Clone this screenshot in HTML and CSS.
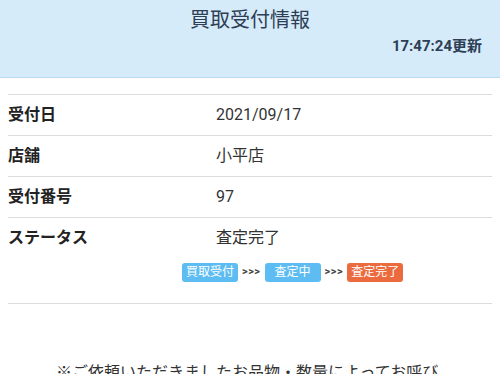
FILE: index.html
```html
<!DOCTYPE html>
<html lang="ja">
<head>
    <meta charset="UTF-8">
    <title>買取受付情報</title>
    <link rel="stylesheet" href="styles.css">
</head>
<body>
    <header class="header">
        <h1>買取受付情報</h1>
        <div class="updated">17:47:24更新</div>
    </header>

    <div class="info">
        <div class="row">
            <div class="label">受付日</div>
            <div class="value">2021/09/17</div>
        </div>
        <div class="row">
            <div class="label">店舗</div>
            <div class="value">小平店</div>
        </div>
        <div class="row">
            <div class="label">受付番号</div>
            <div class="value">97</div>
        </div>
        <div class="row status-row">
            <div class="label">ステータス</div>
            <div class="value">
                査定完了
                <div class="steps">
                    <span class="step">買取受付</span>
                    <span class="arrow">&gt;&gt;&gt;</span>
                    <span class="step wide">査定中</span>
                    <span class="arrow">&gt;&gt;&gt;</span>
                    <span class="step current">査定完了</span>
                </div>
            </div>
        </div>
    </div>

    <p class="notice">※ご依頼いただきましたお品物・数量によってお呼び出しまでお時間がかかる場合がございます。</p>
</body>
</html>
```

FILE: styles.css
```css
body {
    margin: 0;
    font-family: Roboto, "Noto Sans CJK JP", sans-serif;
    color: #333;
    background-color: white;
}

.header {
    background-color: #d6ebfa;
    border-bottom: 1px solid #b9dcf5;
    height: 77px;
    padding: 0 18px;
    box-sizing: content-box;
}

.header h1 {
    margin: 0;
    padding-top: 7px;
    font-size: 20px;
    line-height: 26px;
    font-weight: normal;
    text-align: center;
    color: #2d3e55;
}

.updated {
    text-align: right;
    font-size: 15px;
    line-height: 22px;
    font-weight: bold;
    color: #2d3e55;
    margin-top: 2px;
}

.info {
    margin: 16px 8px 0;
    border-top: 1px solid #dcdcdc;
}

.row {
    display: grid;
    grid-template-columns: 208px 1fr;
    border-bottom: 1px solid #dcdcdc;
    padding: 10px 0;
    font-size: 16px;
    line-height: 20px;
}

.label {
    font-weight: bold;
    color: #222;
}

.value {
    color: #333;
}

.status-row {
    padding-bottom: 21px;
}

.steps {
    display: flex;
    align-items: center;
    gap: 4px;
    margin-top: 14px;
    margin-left: -34px;
}

.step {
    background-color: #5dbcf2;
    color: white;
    font-size: 12px;
    line-height: 19px;
    padding: 0 4px;
    border-radius: 3px;
}

.step.wide {
    padding: 0 10px;
}

.step.current {
    background-color: #eb6b3f;
}

.arrow {
    font-size: 11px;
    font-weight: bold;
    color: #444;
    letter-spacing: 0.5px;
}

.notice {
    margin: 57px 0 0;
    padding: 0 56px;
    font-size: 16px;
    line-height: 24px;
    color: #333;
}
```
